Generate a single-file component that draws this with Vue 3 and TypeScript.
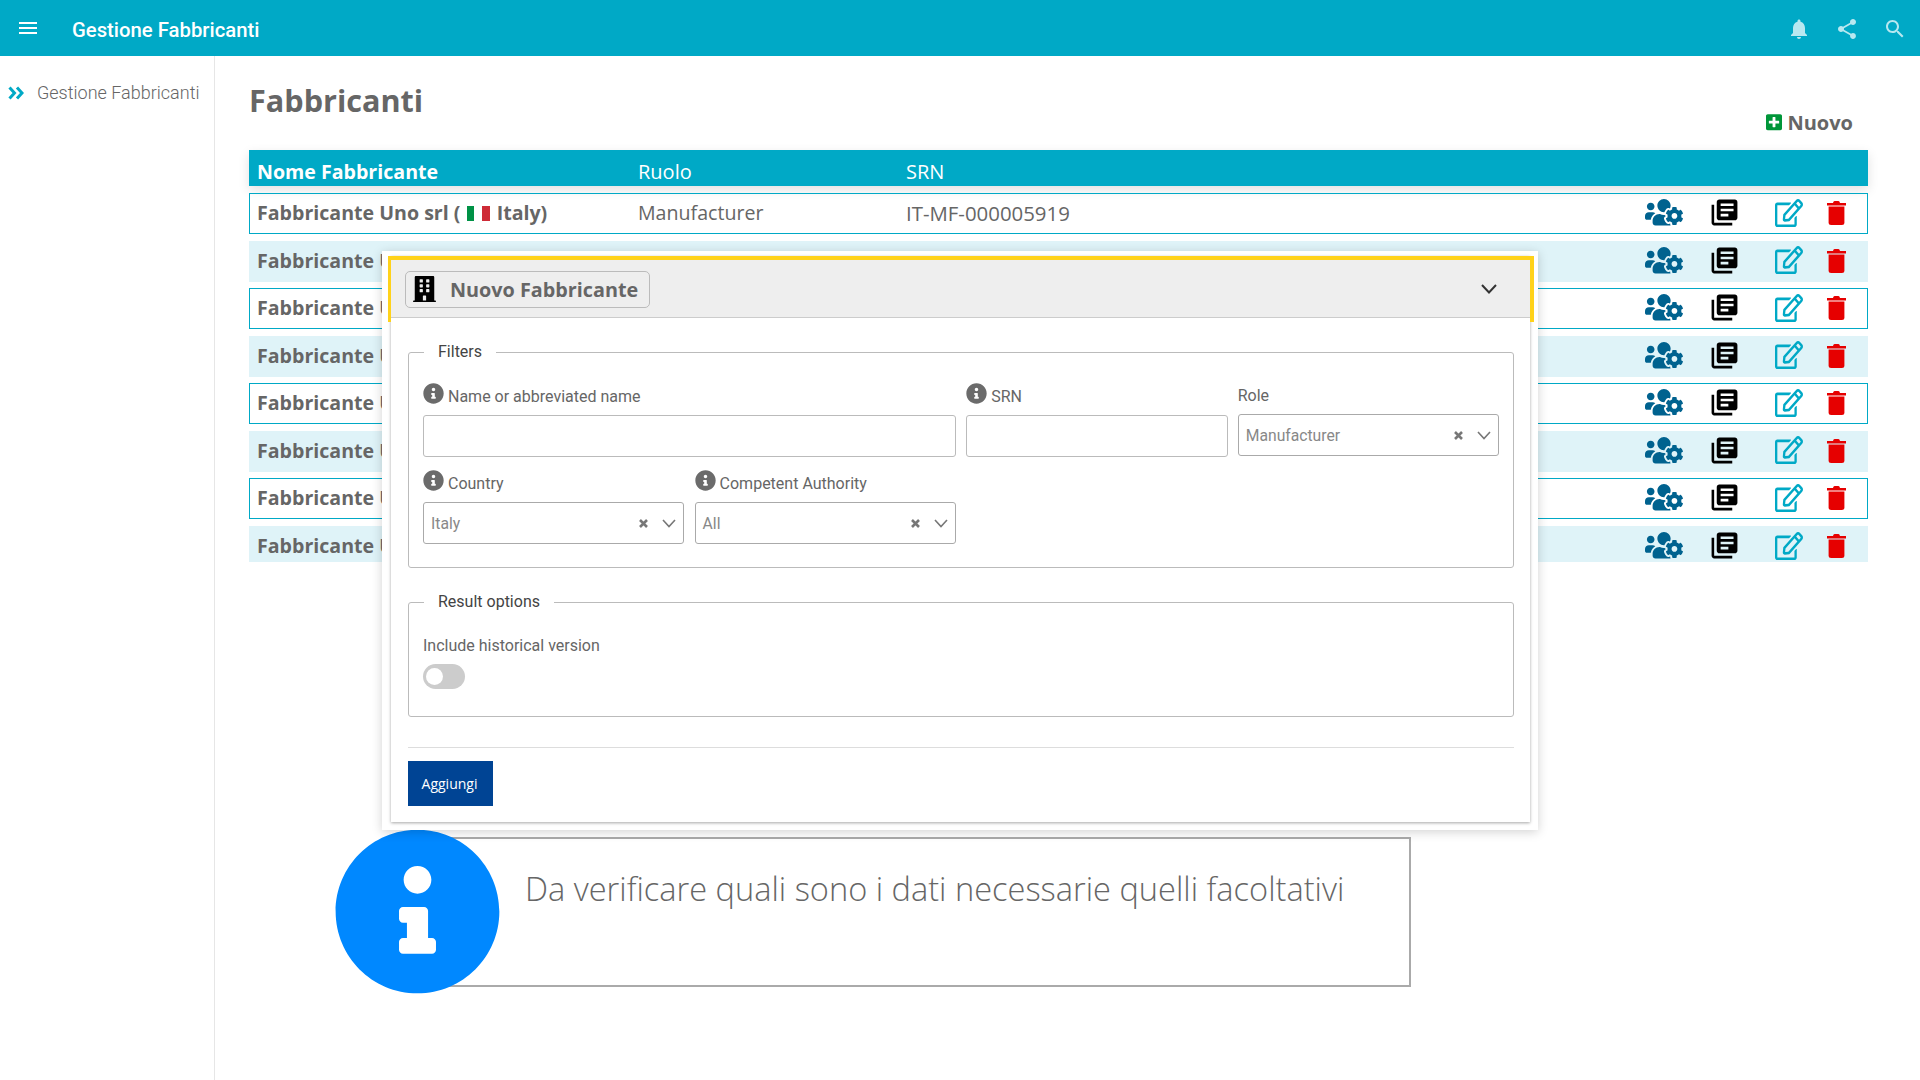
<script setup lang="ts">
import { ref } from "vue";

interface Manufacturer {
	name: string;
	country?: string;
	role?: string;
	srn?: string;
}

// Only the first row is fully visible, the modal covers the others
const manufacturers = ref<Manufacturer[]>([
	{ name: "Fabbricante Uno srl (", country: "Italy)", role: "Manufacturer", srn: "IT-MF-000005919" },
	...Array.from({ length: 7 }, () => ({ name: "Fabbricante U" })),
]);

// ICONS
const infoPath =
	"M256 8C119.043 8 8 119.083 8 256c0 136.997 111.043 248 248 248s248-111.003 248-248C504 119.083 392.957 8 256 8zm0 110c23.196 0 42 18.804 42 42s-18.804 42-42 42-42-18.804-42-42 18.804-42 42-42zm56 254c0 6.627-5.373 12-12 12h-88c-6.627 0-12-5.373-12-12v-24c0-6.627 5.373-12 12-12h12v-46h-12c-6.627 0-12-5.373-12-12v-24c0-6.627 5.373-12 12-12h64c6.627 0 12 5.373 12 12v82h12c6.627 0 12 5.373 12 12v24z";
const usersCogPath =
	"M610.5 341.3c2.6-14.1 2.6-28.5 0-42.6l25.8-14.9c3-1.7 4.3-5.2 3.3-8.5-6.7-21.5-18.2-41-33.2-57.1-2.3-2.5-6-3.1-9-1.4l-25.8 14.9c-10.9-9.3-23.4-16.5-36.9-21.3v-29.8c0-3.4-2.4-6.4-5.7-7.1-22.3-5-45-4.8-66.2 0-3.3.7-5.7 3.7-5.7 7.1v29.8c-13.5 4.8-26 12-36.9 21.3l-25.8-14.9c-2.9-1.7-6.7-1.1-9 1.4-15 16.1-26.5 35.6-33.2 57.1-1 3.3.4 6.8 3.3 8.5l25.8 14.9c-2.6 14.1-2.6 28.5 0 42.6l-25.8 14.9c-3 1.7-4.3 5.2-3.3 8.5 6.7 21.5 18.2 40.9 33.2 57.1 2.3 2.5 6 3.1 9 1.4l25.8-14.9c10.9 9.3 23.4 16.5 36.9 21.3v29.8c0 3.4 2.4 6.4 5.7 7.1 22.3 5 45 4.8 66.2 0 3.3-.7 5.7-3.7 5.7-7.1v-29.8c13.5-4.8 26-12 36.9-21.3l25.8 14.9c2.9 1.7 6.7 1.1 9-1.4 15-16.1 26.5-35.6 33.2-57.1 1-3.3-.4-6.8-3.3-8.5l-25.8-14.9zM496 368.5c-26.8 0-48.5-21.8-48.5-48.5s21.8-48.5 48.5-48.5 48.5 21.8 48.5 48.5-21.7 48.5-48.5 48.5zM96 224c35.3 0 64-28.7 64-64s-28.7-64-64-64-64 28.7-64 64 28.7 64 64 64zm224 32c1.9 0 3.7-.5 5.6-.6 8.3-21.7 20.5-42.1 36.3-59.2 7.4-8 17.9-12.6 28.9-12.6 6.9 0 13.7 1.8 19.6 5.3l7.9 4.6c.8-.5 1.6-.9 2.4-1.4 7-14.6 11.2-30.8 11.2-48 0-61.9-50.1-112-112-112S208 82.1 208 144c0 61.9 50.1 112 112 112zm105.2 194.5c-2.3-1.2-4.6-2.6-6.8-3.9-8.2 4.8-15.3 9.8-27.5 9.8-10.9 0-21.4-4.6-28.9-12.6-18.3-19.8-32.3-43.9-40.2-69.6-10.7-34.5 24.9-49.7 25.8-50.3-.1-2.6-.1-5.2 0-7.8l-7.9-4.6c-3.8-2.2-7-5-9.8-8.1-3.3.2-6.5.6-9.8.6-24.6 0-47.6-6-68.5-16h-8.3C179.6 288 128 339.6 128 403.2V432c0 26.5 21.5 48 48 48h255.4c-3.7-6-6.2-12.8-6.2-20.1v-9.4zM173.1 274.6C161.5 263.1 145.6 256 128 256H64c-35.3 0-64 28.7-64 64v32c0 17.7 14.3 32 32 32h65.9c6.3-47.4 34.9-87.3 75.2-109.4z";
const booksPath =
	"M4 6H2v14c0 1.1.9 2 2 2h14v-2H4V6zm16-4H8c-1.1 0-2 .9-2 2v12c0 1.1.9 2 2 2h12c1.1 0 2-.9 2-2V4c0-1.1-.9-2-2-2zm-1 9H9V9h10v2zm-4 4H9v-2h6v2zm4-8H9V5h10v2z";
const editPath =
	"M402.3 344.9l32-32c5-5 13.7-1.5 13.7 5.7V464c0 26.5-21.5 48-48 48H48c-26.5 0-48-21.5-48-48V112c0-26.5 21.5-48 48-48h273.5c7.1 0 10.7 8.6 5.7 13.7l-32 32c-1.5 1.5-3.5 2.3-5.7 2.3H48v352h352V350.5c0-2.1.8-4.1 2.3-5.6zm156.6-201.8L296.3 405.7l-90.4 10c-26.2 2.9-48.5-19.2-45.6-45.6l10-90.4L432.9 17.1c22.9-22.9 59.9-22.9 82.7 0l43.2 43.2c22.9 22.9 22.9 60 .1 82.8zM460.1 174L402 115.9 216.2 301.8l-7.3 65.3 65.3-7.3L460.1 174zm64.8-79.7l-43.2-43.2c-4.1-4.1-10.8-4.1-14.8 0L436 82l58.1 58.1 30.9-30.9c4-4.2 4-10.8-.1-14.9z";
const buildingPath =
	"M436 480h-20V24c0-13.255-10.745-24-24-24H56C42.745 0 32 10.745 32 24v456H12c-6.627 0-12 5.373-12 12v20h448v-20c0-6.627-5.373-12-12-12zM128 76c0-6.627 5.373-12 12-12h40c6.627 0 12 5.373 12 12v40c0 6.627-5.373 12-12 12h-40c-6.627 0-12-5.373-12-12V76zm0 96c0-6.627 5.373-12 12-12h40c6.627 0 12 5.373 12 12v40c0 6.627-5.373 12-12 12h-40c-6.627 0-12-5.373-12-12v-40zm52 148h-40c-6.627 0-12-5.373-12-12v-40c0-6.627 5.373-12 12-12h40c6.627 0 12 5.373 12 12v40c0 6.627-5.373 12-12 12zm76 160h-64v-84c0-6.627 5.373-12 12-12h40c6.627 0 12 5.373 12 12v84zm64-172c0 6.627-5.373 12-12 12h-40c-6.627 0-12-5.373-12-12v-40c0-6.627 5.373-12 12-12h40c6.627 0 12 5.373 12 12v40zm0-96c0 6.627-5.373 12-12 12h-40c-6.627 0-12-5.373-12-12v-40c0-6.627 5.373-12 12-12h40c6.627 0 12 5.373 12 12v40zm0-96c0 6.627-5.373 12-12 12h-40c-6.627 0-12-5.373-12-12V76c0-6.627 5.373-12 12-12h40c6.627 0 12 5.373 12 12v40z";
</script>

<template>
	<div class="page">
		<header class="topbar">
			<div class="burger"><span></span><span></span><span></span></div>
			<span class="app-title">Gestione Fabbricanti</span>
			<div class="top-icons">
				<svg width="24" height="24" viewBox="0 0 24 24"><path d="M12 22c1.1 0 2-.9 2-2h-4c0 1.1.89 2 2 2zm6-6v-5c0-3.07-1.64-5.64-4.5-6.32V4c0-.83-.67-1.5-1.5-1.5s-1.5.67-1.5 1.5v.68C7.63 5.36 6 7.92 6 11v5l-2 2v1h16v-1l-2-2z" /></svg>
				<svg width="24" height="24" viewBox="0 0 24 24"><path d="M18 16.08c-.76 0-1.44.3-1.96.77L8.91 12.7c.05-.23.09-.46.09-.7s-.04-.47-.09-.7l7.05-4.11c.54.5 1.25.81 2.04.81 1.66 0 3-1.34 3-3s-1.34-3-3-3-3 1.34-3 3c0 .24.04.47.09.7L8.04 9.81C7.5 9.31 6.79 9 6 9c-1.66 0-3 1.34-3 3s1.34 3 3 3c.79 0 1.5-.31 2.04-.81l7.12 4.16c-.05.21-.08.43-.08.65 0 1.61 1.31 2.92 2.92 2.92 1.61 0 2.92-1.31 2.92-2.92s-1.31-2.92-2.92-2.92z" /></svg>
				<svg width="24" height="24" viewBox="0 0 24 24"><path d="M15.5 14h-.79l-.28-.27C15.41 12.59 16 11.11 16 9.5 16 5.91 13.09 3 9.5 3S3 5.91 3 9.5 5.91 16 9.5 16c1.61 0 3.09-.59 4.23-1.57l.27.28v.79l5 4.99L20.49 19l-4.99-5zm-6 0C7.01 14 5 11.99 5 9.5S7.01 5 9.5 5 14 7.01 14 9.5 11.99 14 9.5 14z" /></svg>
			</div>
		</header>

		<div class="content">
			<aside class="sidebar">
				<div class="side-item">
					<svg class="side-arrows" width="16" height="14" viewBox="0 0 16 14" fill="none" stroke="#00a9c6" stroke-width="3">
						<polyline points="1.5,1.5 6.5,7 1.5,12.5" />
						<polyline points="9,1.5 14,7 9,12.5" />
					</svg>
					<span>Gestione Fabbricanti</span>
				</div>
			</aside>

			<main class="main">
				<div class="title-row">
					<h1>Fabbricanti</h1>
					<div class="new-link">
						<svg width="16" height="18.3" viewBox="0 0 448 512" fill="#009639"><path d="M400 32H48C21.5 32 0 53.5 0 80v352c0 26.5 21.5 48 48 48h352c26.5 0 48-21.5 48-48V80c0-26.5-21.5-48-48-48zm-32 252c0 6.6-5.4 12-12 12h-92v92c0 6.6-5.4 12-12 12h-56c-6.6 0-12-5.4-12-12v-92H92c-6.6 0-12-5.4-12-12v-56c0-6.6 5.4-12 12-12h92v-92c0-6.6 5.4-12 12-12h56c6.6 0 12 5.4 12 12v92h92c6.6 0 12 5.4 12 12v56z" /></svg>
						<span>Nuovo</span>
					</div>
				</div>

				<div class="table-head">
					<span class="col-name">Nome Fabbricante</span>
					<span class="col-role">Ruolo</span>
					<span>SRN</span>
				</div>

				<div class="rows">
					<div v-for="(m, index) in manufacturers" :key="index" class="row" :class="{ striped: index % 2 === 1 }">
						<span class="col-name name">
							{{ m.name }}
							<template v-if="m.country">
								<i class="flag"><b></b><b></b><b></b></i>
								{{ m.country }}
							</template>
						</span>
						<span class="col-role">{{ m.role }}</span>
						<span class="col-srn">{{ m.srn }}</span>
						<div class="actions">
							<svg width="38" height="30.4" viewBox="0 0 640 512" fill="#00628f"><path :d="usersCogPath" /></svg>
							<svg class="act-books" width="31" height="31" viewBox="0 0 24 24" fill="#000"><path :d="booksPath" /></svg>
							<svg class="act-edit" width="28" height="28" viewBox="0 0 576 512" preserveAspectRatio="none" fill="#00a9c6"><path :d="editPath" /></svg>
							<svg class="act-trash" width="19" height="25" viewBox="0 0 19 25" fill="#e60000">
								<path d="M0 3h6l.6-1.4Q7 1 7.6 1h3.8q.6 0 1 .6L13 3h6v2.4H0z" />
								<path d="M1.6 6.5h15.8v16q0 2.5-2.5 2.5H4.1q-2.5 0-2.5-2.5z" />
							</svg>
						</div>
					</div>
				</div>

				<div class="note">
					<svg class="note-icon" width="169" height="169" viewBox="0 0 512 512" fill="#0088ff"><path :d="infoPath" /></svg>
					<p>Da verificare quali sono i dati necessarie quelli facoltativi</p>
				</div>
			</main>
		</div>

		<section class="modal-shell">
			<div class="modal-card">
				<div class="modal-head">
					<div class="modal-head-inner">
						<div class="modal-badge">
							<svg width="23" height="26" viewBox="0 0 448 512" fill="#000"><path :d="buildingPath" /></svg>
							<span>Nuovo Fabbricante</span>
						</div>
						<svg class="head-chevron" width="18" height="12" viewBox="0 0 18 12" fill="none" stroke="#333" stroke-width="2"><polyline points="2,2 9,9.5 16,2" /></svg>
					</div>
				</div>

				<div class="modal-body">
					<fieldset class="filters">
						<legend>Filters</legend>
						<div class="form-grid">
							<div class="field span-2">
								<label class="field-label">
									<svg width="21" height="21" viewBox="0 0 512 512" fill="#6b6b6b"><path :d="infoPath" /></svg>
									Name or abbreviated name
								</label>
								<div class="input"></div>
							</div>
							<div class="field">
								<label class="field-label">
									<svg width="21" height="21" viewBox="0 0 512 512" fill="#6b6b6b"><path :d="infoPath" /></svg>
									SRN
								</label>
								<div class="input"></div>
							</div>
							<div class="field field-role">
								<label class="field-label">Role</label>
								<div class="select">
									<span>Manufacturer</span>
									<svg class="sel-x" width="9" height="9" viewBox="0 0 9 9" stroke="#777" stroke-width="2.6"><path d="M1 1l7 7M8 1l-7 7" /></svg>
									<svg class="sel-chev" width="14" height="9" viewBox="0 0 14 9" fill="none" stroke="#777" stroke-width="1.6"><polyline points="1,1 7,7.5 13,1" /></svg>
								</div>
							</div>
							<div class="field">
								<label class="field-label">
									<svg width="21" height="21" viewBox="0 0 512 512" fill="#6b6b6b"><path :d="infoPath" /></svg>
									Country
								</label>
								<div class="select">
									<span>Italy</span>
									<svg class="sel-x" width="9" height="9" viewBox="0 0 9 9" stroke="#777" stroke-width="2.6"><path d="M1 1l7 7M8 1l-7 7" /></svg>
									<svg class="sel-chev" width="14" height="9" viewBox="0 0 14 9" fill="none" stroke="#777" stroke-width="1.6"><polyline points="1,1 7,7.5 13,1" /></svg>
								</div>
							</div>
							<div class="field">
								<label class="field-label">
									<svg width="21" height="21" viewBox="0 0 512 512" fill="#6b6b6b"><path :d="infoPath" /></svg>
									Competent Authority
								</label>
								<div class="select">
									<span>All</span>
									<svg class="sel-x" width="9" height="9" viewBox="0 0 9 9" stroke="#777" stroke-width="2.6"><path d="M1 1l7 7M8 1l-7 7" /></svg>
									<svg class="sel-chev" width="14" height="9" viewBox="0 0 14 9" fill="none" stroke="#777" stroke-width="1.6"><polyline points="1,1 7,7.5 13,1" /></svg>
								</div>
							</div>
						</div>
					</fieldset>

					<fieldset class="options">
						<legend>Result options</legend>
						<div class="option-label">Include historical version</div>
						<div class="toggle"><span></span></div>
					</fieldset>

					<hr />
					<button class="add-btn" type="button">Aggiungi</button>
				</div>
			</div>
		</section>
	</div>
</template>

<style>
html,
body {
	margin: 0;
	background: #fff;
}
</style>

<style scoped>
.page {
	position: relative;
	width: 1920px;
	height: 1080px;
	overflow: hidden;
	font-family: "Open Sans", sans-serif;
	color: #666;
}

/* TOP BAR */
.topbar {
	display: flex;
	align-items: center;
	height: 56px;
	background-color: #00a9c6;
	padding: 0 13px 0 19px;
	box-sizing: border-box;
}
.burger {
	display: flex;
	flex-direction: column;
	gap: 3px;
	width: 18px;
	margin-top: -1px;
}
.burger span {
	height: 2px;
	background: #fff;
}
.app-title {
	margin-left: 35px;
	color: #fff;
	font-family: Roboto, sans-serif;
	font-weight: 500;
	font-size: 20.3px;
	margin-top: 3px;
}
.top-icons {
	display: flex;
	gap: 24px;
	margin-left: auto;
	fill: #b8e8f0;
	margin-top: 1px;
}

/* LAYOUT */
.content {
	display: flex;
	height: 1024px;
}
.sidebar {
	width: 214px;
	flex: none;
	border-right: 1px solid #e6e6e6;
	padding-top: 26px;
}
.side-item {
	display: flex;
	align-items: center;
	gap: 13px;
	padding-left: 8px;
	font-family: Roboto, sans-serif;
	font-weight: 300;
	font-size: 18px;
	line-height: 22px;
}
.main {
	flex: 1;
	padding: 0 52px 0 34px;
	min-width: 0;
}
.title-row {
	display: flex;
	justify-content: space-between;
	height: 94px;
}
h1 {
	margin: 22px 0 0;
	font-size: 30.6px;
	line-height: 44px;
	font-weight: 700;
}
.new-link {
	display: flex;
	align-items: center;
	gap: 5px;
	height: 28px;
	margin: 52px 15px 0 0;
	font-weight: 700;
	font-size: 20px;
}

/* TABLE */
.table-head,
.row {
	display: flex;
	align-items: center;
	font-size: 19.6px;
}
.col-name {
	width: 381px;
	flex: none;
	white-space: nowrap;
}
.col-role {
	width: 268px;
	flex: none;
}
.col-srn {
	font-size: 20.4px;
}
.table-head {
	height: 36px;
	padding: 6px 0 0 8px;
	box-sizing: border-box;
	color: #fff;
	background-color: #00a9c6;
	box-shadow: 0 4px 12px rgba(0, 0, 0, 0.12);
}
.table-head .col-name {
	font-weight: 700;
}
.table-head span:not(.col-name) {
	font-size: 20px;
}
.rows {
	display: flex;
	flex-direction: column;
	gap: 6.5px;
	margin-top: 7px;
}
.row {
	height: 41px;
	box-sizing: border-box;
	border: 1.5px solid #00a9c6;
	padding: 0 0 2px 7px;
}
.row.striped {
	background-color: #dff3f8;
	border-color: transparent;
}
.row:last-child {
	height: 36px;
	padding-top: 4px;
	padding-bottom: 0;
	border-width: 0 1.5px;
}
.name {
	font-weight: 700;
}
.flag {
	display: inline-flex;
	vertical-align: -1px;
	width: 23px;
	height: 15px;
	margin: 0 2px 0 1px;
}
.flag b {
	flex: 1;
}
.flag b:nth-child(1) {
	background: #009246;
}
.flag b:nth-child(2) {
	background: #fff;
}
.flag b:nth-child(3) {
	background: #ce2b37;
}
.actions {
	display: flex;
	align-items: center;
	margin-left: auto;
	margin-right: 21px;
}
.act-books {
	margin-left: 26px;
}
.act-edit {
	margin-left: 35px;
}
.act-trash {
	margin-left: 24px;
}

/* NOTE */
.note {
	position: relative;
	box-sizing: border-box;
	width: 993px;
	height: 150px;
	margin: 275px 0 0 169px;
	border: 2px solid #aaa;
	border-left: none;
	padding: 28px 0 0 107px;
	font-size: 32.6px;
	font-weight: 300;
}
.note p {
	margin: 0;
	line-height: 44px;
	white-space: nowrap;
}
.note-icon {
	position: absolute;
	left: -85px;
	top: -12px;
}

/* MODAL */
.modal-shell {
	position: absolute;
	left: 382px;
	top: 251px;
	width: 1156px;
	height: 579px;
	box-sizing: border-box;
	padding: 5px 8px 8px 9px;
	background: #fff;
	box-shadow: 0 2px 10px rgba(0, 0, 0, 0.18);
}
.modal-card {
	height: 100%;
	background: #fff;
	box-shadow: 0 1px 3px rgba(0, 0, 0, 0.35);
}
.modal-head {
	margin: 0 -4px 0 -3px;
	border: solid #ffd21a;
	border-width: 4px 4px 0 3px;
	padding-bottom: 4px;
}
.modal-head-inner {
	display: flex;
	align-items: center;
	justify-content: space-between;
	height: 58px;
	box-sizing: border-box;
	background: #eee;
	border-bottom: 1px solid #ccc;
	padding: 0 32px 0 14px;
}
.modal-badge {
	display: flex;
	align-items: center;
	gap: 14px;
	height: 37px;
	margin-top: 1px;
	box-sizing: border-box;
	padding: 0 11px 0 7px;
	border: 1px solid #bbb;
	border-radius: 5px;
	font-weight: 700;
	font-size: 19.8px;
}
.modal-body {
	padding: 20px 16px 0 17px;
}
fieldset {
	margin: 0;
	padding: 0;
	border: 1px solid #bbb;
	border-radius: 3px;
}
legend {
	margin-left: 1px;
	padding: 0 14px;
	font-family: Roboto, sans-serif;
	font-size: 16px;
	line-height: 20px;
	color: #444;
}
.filters {
	height: 226px;
	box-sizing: border-box;
	padding: 21px 14px 0;
}
.form-grid {
	display: grid;
	grid-template-columns: repeat(4, 261.4px);
	column-gap: 10.2px;
	row-gap: 13px;
}
.span-2 {
	grid-column: span 2;
}
.field {
	display: flex;
	flex-direction: column;
	font-family: Roboto, sans-serif;
}
.field-role {
	margin-top: -1px;
}
.field-label {
	display: flex;
	align-items: flex-start;
	gap: 4px;
	height: 32px;
	font-weight: 400;
	font-size: 16px;
	line-height: 27px;
}
.field-label svg {
	flex: none;
}
.input,
.select {
	height: 42px;
	box-sizing: border-box;
	border: 1px solid #bbb;
	border-radius: 3px;
}
.select {
	display: flex;
	align-items: center;
	padding: 0 7px 0 7px;
	border-color: #aaa;
	font-size: 15.7px;
	font-weight: 400;
	color: #888;
}
.sel-x {
	margin-left: auto;
}
.sel-chev {
	margin-left: 14px;
}
.options {
	margin-top: 24px;
	height: 125px;
	box-sizing: border-box;
	padding: 24px 14px 0;
}
.option-label {
	font-family: Roboto, sans-serif;
	font-weight: 400;
	font-size: 16px;
	line-height: 20px;
}
.toggle {
	position: relative;
	width: 42px;
	height: 25px;
	margin-top: 8px;
	border-radius: 13px;
	background: #ccc;
}
.toggle span {
	position: absolute;
	left: 3px;
	top: 4px;
	width: 17px;
	height: 17px;
	border-radius: 50%;
	background: #fff;
}
hr {
	margin: 30px 0 13px;
	border: none;
	border-top: 1px solid #ddd;
}
.add-btn {
	display: block;
	width: 85px;
	height: 45px;
	padding: 0 8px 0 6px;
	border: none;
	background: #004494;
	color: #fff;
	font-family: "Open Sans", sans-serif;
	font-size: 14px;
}
</style>
